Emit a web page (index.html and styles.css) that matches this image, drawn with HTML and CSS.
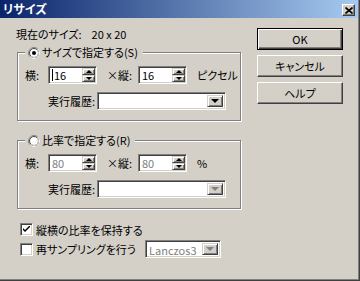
FILE: index.html
```html
<!DOCTYPE html>
<html>
<head>
  <meta charset="utf-8">
  <title>リサイズ</title>
  <link rel="stylesheet" href="styles.css">
</head>
<body>
  <div class="window">
    <div class="titlebar">
      <span class="title">リサイズ</span>
      <span class="close">
        <svg width="8" height="7" viewBox="0 0 8 7"><path d="M0.5 0.5 L7.5 6.5 M7.5 0.5 L0.5 6.5" stroke="#000" stroke-width="1.6"/></svg>
      </span>
    </div>
    <div class="client">
      <div class="main">
        <div class="current"><span>現在のサイズ:</span><span class="cur-val">20 x 20</span></div>

        <fieldset class="group">
          <legend>
            <span class="radio">
              <svg width="12" height="12" viewBox="0 0 12 12">
                <circle cx="6" cy="6" r="5.5" fill="#fff" stroke="#808080"/>
                <path d="M9.9 2.1 A5.5 5.5 0 0 1 2.1 9.9" fill="none" stroke="#fff"/>
                <circle cx="6" cy="6" r="4.5" fill="#fff" stroke="#404040"/>
                <path d="M9.2 2.8 A4.5 4.5 0 0 1 2.8 9.2" fill="none" stroke="#d4d0c8"/>
                <circle cx="6" cy="6" r="2" fill="#000"/>
              </svg>
            </span>サイズで指定する(S)
          </legend>
          <div class="row">
            <span class="lbl">横:</span>
            <div class="spin sunken">
              <span class="val"><span class="caret"></span>16</span>
              <span class="arrows"><span class="sbtn"><span class="up"></span></span><span class="sbtn"><span class="dn"></span></span></span>
            </div>
            <span class="times">×</span>
            <span class="lbl2">縦:</span>
            <div class="spin sunken">
              <span class="val">16</span>
              <span class="arrows"><span class="sbtn"><span class="up"></span></span><span class="sbtn"><span class="dn"></span></span></span>
            </div>
            <span class="unit">ピクセル</span>
          </div>
          <div class="row hist">
            <span class="hist-lbl">実行履歴:</span>
            <div class="combo sunken">
              <span class="combo-text"></span>
              <span class="drop"><span class="dn-big"></span></span>
            </div>
          </div>
        </fieldset>

        <fieldset class="group group2">
          <legend>
            <span class="radio">
              <svg width="12" height="12" viewBox="0 0 12 12">
                <circle cx="6" cy="6" r="5.5" fill="#fff" stroke="#808080"/>
                <path d="M9.9 2.1 A5.5 5.5 0 0 1 2.1 9.9" fill="none" stroke="#fff"/>
                <circle cx="6" cy="6" r="4.5" fill="#fff" stroke="#404040"/>
                <path d="M9.2 2.8 A4.5 4.5 0 0 1 2.8 9.2" fill="none" stroke="#d4d0c8"/>
              </svg>
            </span>比率で指定する(R)
          </legend>
          <div class="row">
            <span class="lbl">横:</span>
            <div class="spin sunken disabled">
              <span class="val">80</span>
              <span class="arrows"><span class="sbtn"><span class="up"></span></span><span class="sbtn"><span class="dn"></span></span></span>
            </div>
            <span class="times">×</span>
            <span class="lbl2">縦:</span>
            <div class="spin sunken disabled">
              <span class="val">80</span>
              <span class="arrows"><span class="sbtn"><span class="up"></span></span><span class="sbtn"><span class="dn"></span></span></span>
            </div>
            <span class="unit">%</span>
          </div>
          <div class="row hist">
            <span class="hist-lbl">実行履歴:</span>
            <div class="combo sunken disabled">
              <span class="combo-text"></span>
              <span class="drop"><span class="dn-big"></span></span>
            </div>
          </div>
        </fieldset>

        <div class="check-row">
          <span class="checkbox sunken">
            <svg width="7" height="7" viewBox="0 0 7 7"><path d="M0 2 L0 4 L2 6 L7 1 L7 -1 L2 4 Z" fill="#000"/></svg>
          </span>
          <span>縦横の比率を保持する</span>
        </div>
        <div class="check-row check-row2">
          <span class="checkbox sunken"></span>
          <span class="resample">再サンプリングを行う</span>
          <div class="combo sunken disabled lanczos">
            <span class="combo-text">Lanczos3</span>
            <span class="drop"><span class="dn-big"></span></span>
          </div>
        </div>
      </div>

      <div class="buttons">
        <div class="btn btn-default">OK</div>
        <div class="btn">キャンセル</div>
        <div class="btn">ヘルプ</div>
      </div>
    </div>
  </div>
</body>
</html>
```

FILE: styles.css
```css
body {
  margin: 0;
  font-family: "Noto Sans CJK JP", sans-serif;
  font-size: 11px;
  font-feature-settings: "palt";
  color: #000;
  background: #d4d0c8;
}
.window {
  width: 360px;
  height: 281px;
  box-sizing: border-box;
  background: #d4d0c8;
  border-right: 1px solid #404040;
  border-bottom: 1px solid #404040;
  box-shadow: inset -1px -1px 0 #808080;
}
.titlebar {
  height: 18px;
  margin-right: 1px;
  display: flex;
  align-items: center;
  justify-content: space-between;
  padding-left: 3px;
  background: linear-gradient(to right, #0a246a, #a6caf0);
}
.title {
  color: #fff;
  font-weight: bold;
  font-size: 12px;
  line-height: 14px;
}
.close {
  width: 13px;
  height: 12px;
  box-sizing: border-box;
  margin: 2px 3px 0 0;
  display: flex;
  align-items: center;
  justify-content: center;
  background: #d4d0c8;
  border: 1px solid;
  border-color: #fff #404040 #404040 #fff;
  box-shadow: inset -1px -1px 0 #808080;
}
.client {
  display: flex;
  padding: 10px 0 0 16px;
}
.main {
  width: 225px;
  flex-shrink: 0;
  display: flex;
  flex-direction: column;
}
.current {
  height: 12px;
  line-height: 12px;
  display: flex;
}
.cur-val {
  margin-left: 10px;
}
.group {
  width: 224px;
  box-sizing: border-box;
  margin: 6px 0 0 1px;
  padding: 7px 0 10px 7px;
  border: 1px solid #808080;
  box-shadow: inset 1px 1px 0 #fff, 1px 1px 0 #fff;
}
.group2 {
  margin-top: 13px;
}
.group legend {
  display: flex;
  align-items: center;
  height: 13px;
  padding: 0 5px 0 3px;
  background: #d4d0c8;
  line-height: 13px;
}
.radio {
  display: flex;
  width: 12px;
  height: 12px;
  margin-right: 2px;
}
.row {
  display: flex;
  align-items: center;
  height: 18px;
  white-space: nowrap;
}
.row > * {
  flex-shrink: 0;
}
.lbl {
  width: 23px;
}
.times {
  width: 11px;
  margin-left: 10px;
}
.lbl2 {
  width: 20px;
}
.unit {
  margin-left: 10px;
}
.sunken {
  box-sizing: border-box;
  background: #fff;
  border: 1px solid;
  border-color: #808080 #fff #fff #808080;
  box-shadow: inset 1px 1px 0 #404040, inset -1px -1px 0 #d4d0c8;
}
.spin {
  width: 49px;
  height: 18px;
  display: flex;
  padding: 1px;
}
.spin .val {
  flex: 1;
  line-height: 14px;
  padding-left: 2px;
  display: flex;
  align-items: center;
}
.caret {
  width: 1px;
  height: 12px;
  background: #000;
  margin-right: 1px;
}
.disabled .val,
.disabled .combo-text {
  color: #808080;
}
.arrows {
  width: 13px;
  display: flex;
  flex-direction: column;
}
.sbtn {
  flex: 1;
  box-sizing: border-box;
  background: #d4d0c8;
  border: 1px solid;
  border-color: #d4d0c8 #404040 #404040 #d4d0c8;
  box-shadow: inset 1px 1px 0 #fff, inset -1px -1px 0 #808080;
  display: flex;
  align-items: center;
  justify-content: center;
}
.up {
  width: 0;
  height: 0;
  border-left: 3px solid transparent;
  border-right: 3px solid transparent;
  border-bottom: 3px solid #000;
}
.dn {
  width: 0;
  height: 0;
  border-left: 3px solid transparent;
  border-right: 3px solid transparent;
  border-top: 3px solid #000;
}
.hist {
  margin-top: 8px;
}
.hist-lbl {
  width: 72px;
  box-sizing: border-box;
  text-align: right;
  padding-right: 2px;
}
.combo {
  width: 129px;
  height: 18px;
  display: flex;
  padding: 2px;
  flex-shrink: 0;
}
.combo-text {
  flex: 1;
  line-height: 14px;
  padding-left: 1px;
  overflow: hidden;
  white-space: nowrap;
}
.drop {
  width: 16px;
  flex-shrink: 0;
  box-sizing: border-box;
  background: #d4d0c8;
  border: 1px solid;
  border-color: #d4d0c8 #404040 #404040 #d4d0c8;
  box-shadow: inset 1px 1px 0 #fff, inset -1px -1px 0 #808080;
  display: flex;
  align-items: center;
  justify-content: center;
}
.dn-big {
  width: 0;
  height: 0;
  border-left: 4px solid transparent;
  border-right: 4px solid transparent;
  border-top: 4px solid #000;
}
.disabled .dn-big {
  border-top-color: #808080;
}
.check-row {
  display: flex;
  align-items: center;
  height: 13px;
  margin: 14px 0 0 4px;
  white-space: nowrap;
}
.check-row2 {
  height: 18px;
  margin-top: 4px;
}
.checkbox {
  width: 13px;
  height: 13px;
  margin-right: 3px;
  flex-shrink: 0;
  display: flex;
  align-items: center;
  justify-content: center;
}
.resample {
  width: 109px;
  flex-shrink: 0;
}
.lanczos {
  width: 76px;
  height: 18px;
}
.lanczos .combo-text {
  line-height: 14px;
  overflow: visible;
}
.buttons {
  width: 86px;
  margin-left: 16px;
  display: flex;
  flex-direction: column;
  gap: 5px;
}
.btn {
  height: 22px;
  box-sizing: border-box;
  display: flex;
  align-items: center;
  justify-content: center;
  border: 1px solid;
  border-color: #fff #404040 #404040 #fff;
  box-shadow: inset -1px -1px 0 #808080;
}
.btn-default {
  border-color: #000;
  box-shadow: inset 1px 1px 0 #fff, inset -1px -1px 0 #404040, inset -2px -2px 0 #808080;
}
```
